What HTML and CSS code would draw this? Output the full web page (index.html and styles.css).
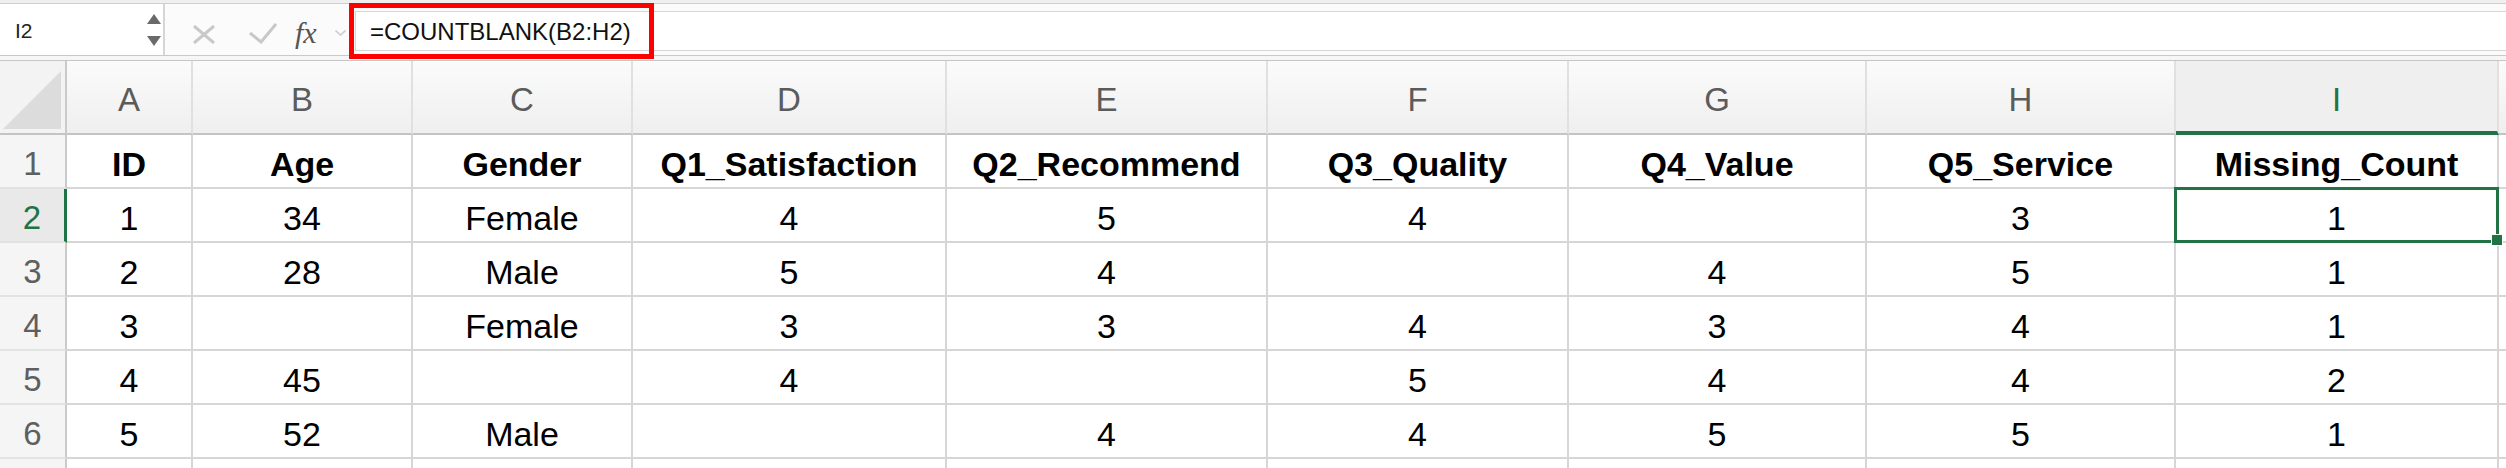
FILE: index.html
```html
<!DOCTYPE html>
<html>
<head>
<meta charset="utf-8">
<link rel="stylesheet" href="styles.css">
</head>
<body>
<div class="app">
  <div class="topstrip"></div>
  <div class="fbar">
    <div class="namebox">
      <span class="name">I2</span>
      <svg class="spin" width="14" height="33" viewBox="0 0 14 33"><polygon points="7,0 14,10 0,10" fill="#6a6a6a"/><polygon points="0,22 14,22 7,32" fill="#6a6a6a"/></svg>
    </div>
    <svg class="ic-x" width="22" height="19" viewBox="0 0 22 19"><path d="M1 1 L21 18 M21 1 L1 18" stroke="#c8c8c8" stroke-width="3" fill="none"/></svg>
    <svg class="ic-check" width="28" height="21" viewBox="0 0 28 21"><path d="M1 10 L12 19 L27 1" stroke="#c8c8c8" stroke-width="3" fill="none"/></svg>
    <span class="fx">fx</span>
    <svg class="ic-chev" width="11" height="6" viewBox="0 0 11 6"><path d="M0.5 0.5 L5.5 5 L10.5 0.5" stroke="#cdcdcd" stroke-width="1.6" fill="none"/></svg>
    <div class="finput">=COUNTBLANK(B2:H2)</div>
    <div class="redbox"></div>
  </div>
  <div class="sep"></div>
  <div class="sheet">
    <div class="corner"><svg width="60" height="60" viewBox="0 0 60 60"><polygon points="1,59 59,1 59,59" fill="#dcdcdc"/></svg></div>
    <div class="ch">A</div><div class="ch">B</div><div class="ch">C</div><div class="ch">D</div><div class="ch">E</div><div class="ch">F</div><div class="ch">G</div><div class="ch">H</div><div class="ch ch-sel">I</div><div class="ch ch-fill"></div>

    <div class="rh">1</div><div class="c b">ID</div><div class="c b">Age</div><div class="c b">Gender</div><div class="c b">Q1_Satisfaction</div><div class="c b">Q2_Recommend</div><div class="c b">Q3_Quality</div><div class="c b">Q4_Value</div><div class="c b">Q5_Service</div><div class="c b">Missing_Count</div><div class="c fill"></div>

    <div class="rh rh-sel">2</div><div class="c">1</div><div class="c">34</div><div class="c">Female</div><div class="c">4</div><div class="c">5</div><div class="c">4</div><div class="c"></div><div class="c">3</div><div class="c sel">1</div><div class="c fill"></div>

    <div class="rh">3</div><div class="c">2</div><div class="c">28</div><div class="c">Male</div><div class="c">5</div><div class="c">4</div><div class="c"></div><div class="c">4</div><div class="c">5</div><div class="c">1</div><div class="c fill"></div>

    <div class="rh">4</div><div class="c">3</div><div class="c"></div><div class="c">Female</div><div class="c">3</div><div class="c">3</div><div class="c">4</div><div class="c">3</div><div class="c">4</div><div class="c">1</div><div class="c fill"></div>

    <div class="rh">5</div><div class="c">4</div><div class="c">45</div><div class="c"></div><div class="c">4</div><div class="c"></div><div class="c">5</div><div class="c">4</div><div class="c">4</div><div class="c">2</div><div class="c fill"></div>

    <div class="rh">6</div><div class="c">5</div><div class="c">52</div><div class="c">Male</div><div class="c"></div><div class="c">4</div><div class="c">4</div><div class="c">5</div><div class="c">5</div><div class="c">1</div><div class="c fill"></div>

    <div class="rh"></div><div class="c"></div><div class="c"></div><div class="c"></div><div class="c"></div><div class="c"></div><div class="c"></div><div class="c"></div><div class="c"></div><div class="c"></div><div class="c fill"></div>
  </div>
</div>
</body>
</html>
```
FILE: styles.css
```css
html, body {
  margin: 0;
  padding: 0;
  background: #ffffff;
}
body {
  width: 2506px;
  height: 468px;
  overflow: hidden;
  font-family: "Liberation Sans", Arial, sans-serif;
}
.app {
  width: 2506px;
}
.topstrip {
  height: 3px;
  background: #efefef;
}
.fbar {
  position: relative;
  display: flex;
  align-items: flex-start;
  height: 51px;
  background: #fbfbfb;
  border-top: 1px solid #cfcfcf;
  border-bottom: 1px solid #c9c9c9;
}
.namebox {
  display: flex;
  align-items: center;
  width: 163px;
  height: 51px;
  background: #ffffff;
  border-right: 2px solid #d6d6d6;
  box-sizing: content-box;
}
.name {
  padding-left: 15px;
  padding-top: 3px;
  font-size: 21px;
  color: #1f1f1f;
}
.spin {
  margin-left: auto;
  margin-right: 2px;
  margin-top: 2px;
}
.ic-x {
  margin-left: 28px;
  margin-top: 21px;
}
.ic-check {
  margin-left: 34px;
  margin-top: 19px;
}
.fx {
  margin-left: 18px;
  margin-top: 13px;
  width: 30px;
  font-family: "Liberation Serif", "Times New Roman", serif;
  font-style: italic;
  font-size: 30px;
  line-height: 32px;
  color: #555555;
}
.ic-chev {
  margin-left: 10px;
  margin-top: 26px;
}
.finput {
  flex: 1;
  margin-left: 9px;
  margin-top: 7px;
  height: 40px;
  box-sizing: border-box;
  background: #ffffff;
  border-top: 1px solid #d6d6d6;
  border-bottom: 1px solid #d6d6d6;
  border-left: 1px solid #d6d6d6;
  padding-left: 14px;
  padding-top: 2px;
  font-size: 24px;
  line-height: 35px;
  color: #111111;
  white-space: nowrap;
}
.redbox {
  position: absolute;
  left: 349px;
  top: -1px;
  width: 305px;
  height: 56px;
  box-sizing: border-box;
  border: 5px solid #ff0000;
}
.sep {
  height: 4px;
  background: #f6f6f6;
  border-bottom: 1px solid #c6c6c6;
}
.sheet {
  display: grid;
  grid-template-columns: 67px 126px 220px 220px 314px 321px 301px 298px 309px 323px 1fr;
  grid-template-rows: 74px repeat(7, 54px);
}
.sheet > div {
  box-sizing: border-box;
}
.corner {
  background: #f3f3f3;
  border-right: 2px solid #cacaca;
  border-bottom: 2px solid #c4c4c4;
  display: flex;
  align-items: flex-end;
  justify-content: flex-end;
  padding: 0 3px 3px 0;
}
.corner svg {
  display: block;
}
.ch {
  background: linear-gradient(#fbfbfb, #efefef);
  border-right: 2px solid #e0e0e0;
  border-bottom: 2px solid #c4c4c4;
  text-align: center;
  font-size: 33px;
  color: #5b5b5b;
  padding-top: 6px;
  line-height: 66px;
}
.ch-sel {
  background: #efefef;
  color: #217346;
  border-bottom: 4px solid #217346;
}
.ch-fill {
  border-right: none;
}
.rh {
  background: #f5f5f5;
  border-right: 2px solid #cacaca;
  border-bottom: 2px solid #e2e2e2;
  text-align: center;
  font-size: 33px;
  color: #5f5f5f;
  padding-top: 6px;
  line-height: 46px;
}
.rh-sel {
  background: #e9e9e9;
  color: #217346;
  border-right: 3px solid #217346;
}
.c {
  border-right: 2px solid #d6d6d6;
  border-bottom: 2px solid #d6d6d6;
  text-align: center;
  font-size: 34px;
  color: #000000;
  padding-top: 6px;
  line-height: 46px;
  white-space: nowrap;
}
.c.b {
  font-weight: bold;
}
.c.fill {
  border-right: none;
}
.c.sel {
  position: relative;
  z-index: 2;
}
.c.sel::before {
  content: "";
  position: absolute;
  left: -2px;
  right: -2px;
  top: -2px;
  bottom: -2px;
  border: 3px solid #217346;
}
.c.sel::after {
  content: "";
  position: absolute;
  right: -6px;
  bottom: -5px;
  width: 10px;
  height: 10px;
  background: #217346;
  border: 1px solid #ffffff;
}
```
